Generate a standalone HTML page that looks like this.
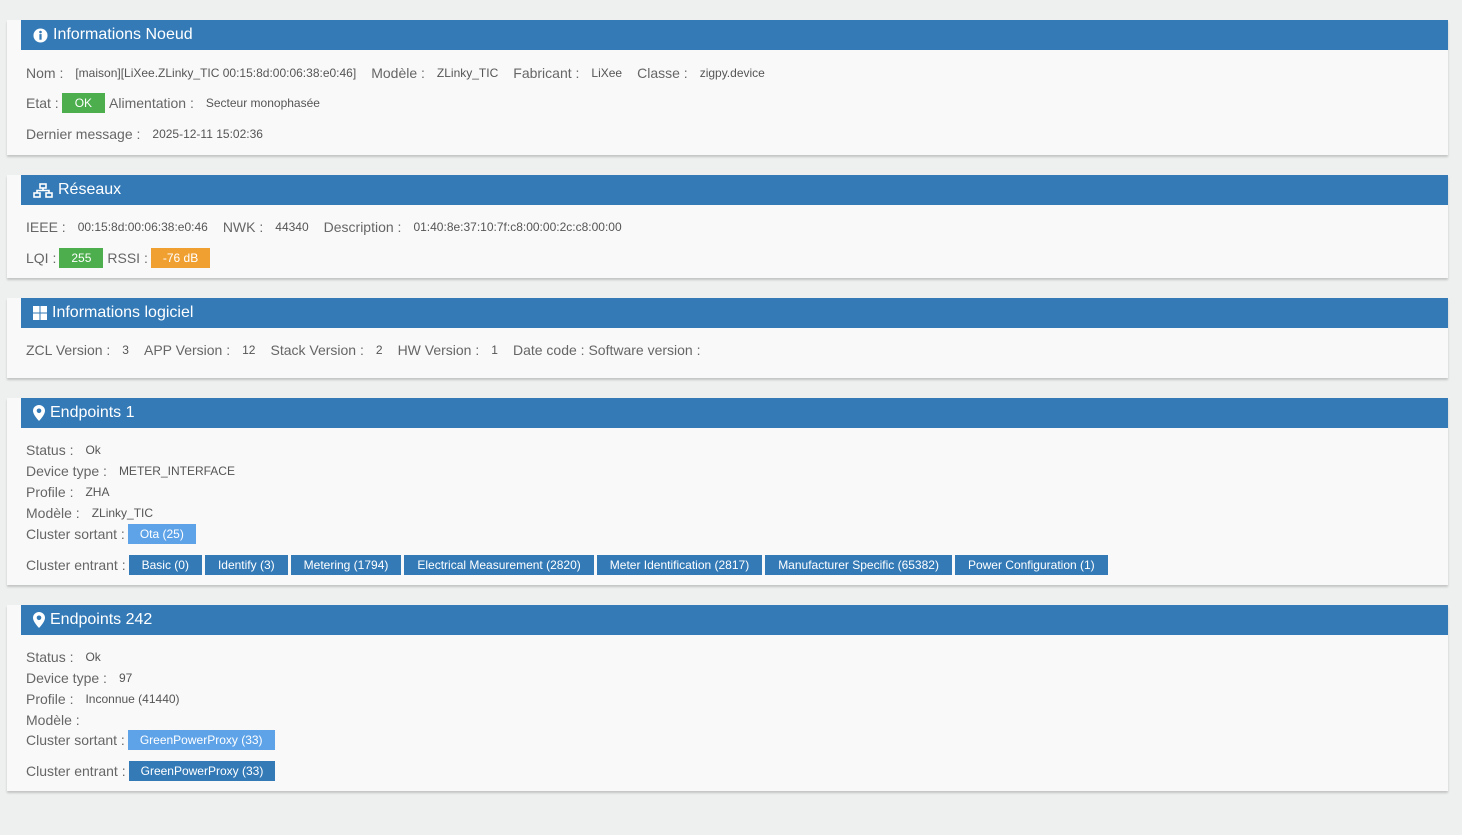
<!DOCTYPE html>
<html><head><meta charset="utf-8"><style>
body{margin:0;background:#eef0ef;width:1462px;height:835px;position:relative;font-family:"Liberation Sans",Arial,sans-serif;overflow:hidden}
.p{position:absolute;left:7px;width:1441px;background:#f9f9f9;box-shadow:0 2px 2px rgba(0,0,0,.18)}
.h{margin-left:14px;height:30px;background:#337ab7;color:#fff;font-size:16px;line-height:32px;padding-left:12px;display:flex;align-items:center;gap:5px}
.r{position:absolute;left:19px;font-size:14px;color:#666;white-space:nowrap;display:flex;align-items:center}
.v{font-size:12px;color:#555;margin:0 15px 0 12px}
.b{display:inline-block;color:#fff;font-size:12px;height:20px;line-height:20px;padding:0 12px;margin-left:3px}
.e .b{padding:0 13px}
.g{background:#4cae4c}.o{background:#f0a030}.lb{background:#5ea3e8}.db{background:#337ab7}
</style></head><body>

<div class="p" style="top:20px;height:135px">
<div class="h"><svg width="15" height="15" viewBox="0 0 16 16"><circle cx="8" cy="8" r="7.5" fill="#fff"/><rect x="6.8" y="6.5" width="2.4" height="6" fill="#337ab7"/><circle cx="8" cy="4.3" r="1.4" fill="#337ab7"/></svg>Informations Noeud</div>
<div class="r" style="top:45px">Nom :<span class="v">[maison][LiXee.ZLinky_TIC 00:15:8d:00:06:38:e0:46]</span>Modèle :<span class="v">ZLinky_TIC</span>Fabricant :<span class="v">LiXee</span>Classe :<span class="v">zigpy.device</span></div>
<div class="r" style="top:73px">Etat :<span class="b g" style="margin-right:4px;padding:0 13px">OK</span>Alimentation :<span class="v">Secteur monophasée</span></div>
<div class="r" style="top:106px">Dernier message :<span class="v">2025-12-11 15:02:36</span></div>
</div>

<div class="p" style="top:175px;height:103px">
<div class="h"><svg width="20" height="15" viewBox="0 0 20 15" fill="none" stroke="#fff" stroke-width="1.6"><rect x="7" y="1" width="6" height="4"/><rect x="1" y="10" width="6" height="4"/><rect x="13" y="10" width="6" height="4"/><path d="M10 5v2.5M4 10V7.5h12V10"/></svg>Réseaux</div>
<div class="r" style="top:44px">IEEE :<span class="v">00:15:8d:00:06:38:e0:46</span>NWK :<span class="v">44340</span>Description :<span class="v">01:40:8e:37:10:7f:c8:00:00:2c:c8:00:00</span></div>
<div class="r" style="top:73px">LQI :<span class="b g" style="padding:0 12px;margin-right:4px">255</span>RSSI :<span class="b o">-76 dB</span></div>
</div>

<div class="p" style="top:298px;height:80px">
<div class="h" style="padding-left:12px"><svg width="14" height="14" viewBox="0 0 14 14" fill="#fff"><rect x="0" y="0" width="6.5" height="6.5"/><rect x="7.5" y="0" width="6.5" height="6.5"/><rect x="0" y="7.5" width="6.5" height="6.5"/><rect x="7.5" y="7.5" width="6.5" height="6.5"/></svg>Informations logiciel</div>
<div class="r" style="top:44px">ZCL Version :<span class="v">3</span>APP Version :<span class="v">12</span>Stack Version :<span class="v">2</span>HW Version :<span class="v">1</span>Date code : Software version :</div>
</div>

<div class="p" style="top:398px;height:187px">
<div class="h"><svg width="12" height="16" viewBox="0 0 12 16"><path d="M6 0C2.7 0 0 2.6 0 5.8 0 10 6 16 6 16s6-6 6-10.2C12 2.6 9.3 0 6 0z" fill="#fff"/><circle cx="6" cy="5.8" r="2.3" fill="#337ab7"/></svg>Endpoints 1</div>
<div class="r" style="top:44px">Status :<span class="v">Ok</span></div>
<div class="r" style="top:65px">Device type :<span class="v">METER_INTERFACE</span></div>
<div class="r" style="top:86px">Profile :<span class="v">ZHA</span></div>
<div class="r" style="top:107px">Modèle :<span class="v">ZLinky_TIC</span></div>
<div class="r" style="top:126px">Cluster sortant :<span class="b lb">Ota (25)</span></div>
<div class="r e" style="top:157px">Cluster entrant :<span class="b db">Basic (0)</span><span class="b db">Identify (3)</span><span class="b db">Metering (1794)</span><span class="b db">Electrical Measurement (2820)</span><span class="b db">Meter Identification (2817)</span><span class="b db">Manufacturer Specific (65382)</span><span class="b db">Power Configuration (1)</span></div>
</div>

<div class="p" style="top:605px;height:186px">
<div class="h"><svg width="12" height="16" viewBox="0 0 12 16"><path d="M6 0C2.7 0 0 2.6 0 5.8 0 10 6 16 6 16s6-6 6-10.2C12 2.6 9.3 0 6 0z" fill="#fff"/><circle cx="6" cy="5.8" r="2.3" fill="#337ab7"/></svg>Endpoints 242</div>
<div class="r" style="top:44px">Status :<span class="v">Ok</span></div>
<div class="r" style="top:65px">Device type :<span class="v">97</span></div>
<div class="r" style="top:86px">Profile :<span class="v">Inconnue (41440)</span></div>
<div class="r" style="top:107px">Modèle :</div>
<div class="r" style="top:125px">Cluster sortant :<span class="b lb">GreenPowerProxy (33)</span></div>
<div class="r" style="top:156px">Cluster entrant :<span class="b db">GreenPowerProxy (33)</span></div>
</div>

</body></html>
